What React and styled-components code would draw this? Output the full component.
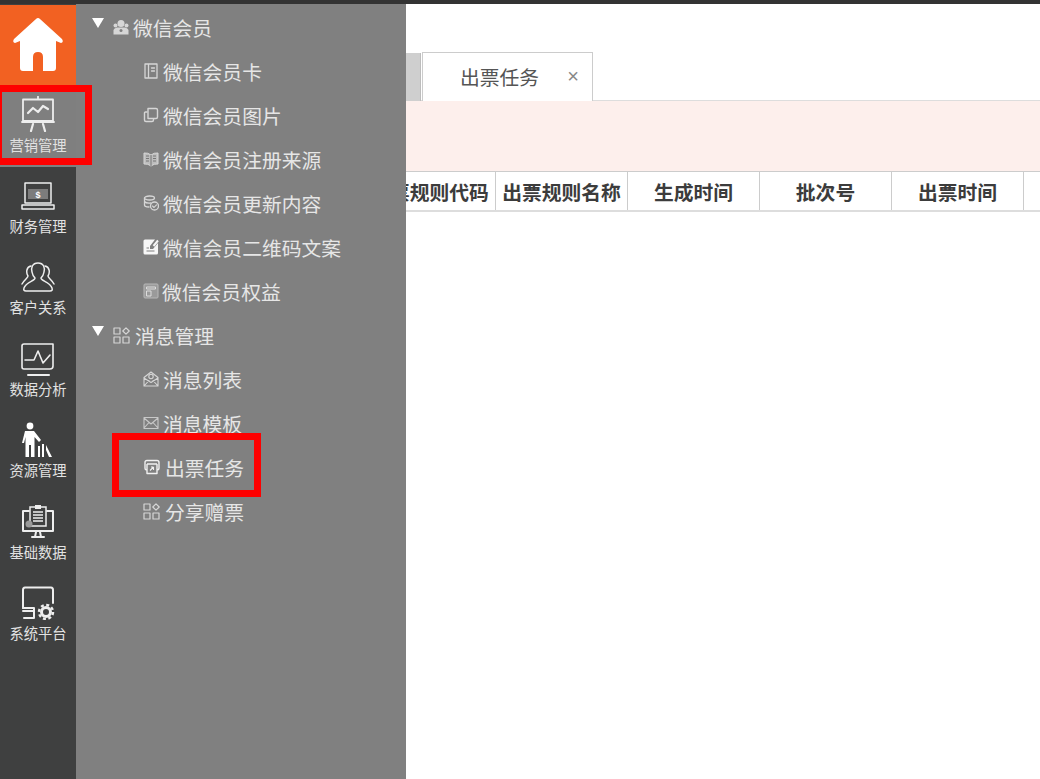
import React from "react";
import styled, { createGlobalStyle } from "styled-components";

const Global = createGlobalStyle`
  html, body { margin: 0; padding: 0; height: 100%; background: #fff; }
  body { font-family: "Noto Sans CJK SC", "Liberation Sans", sans-serif; overflow: hidden; }
  #root { height: 100%; }
`;

const Shell = styled.div`
  position: relative;
  width: 1040px;
  height: 779px;
  overflow: hidden;
  display: flex;
  flex-direction: column;
`;
const TopBar = styled.div`
  height: 4px;
  flex: none;
  background: #333;
`;
const Body = styled.div`
  flex: 1;
  display: flex;
  min-height: 0;
`;

/* left dark nav */
const Sidebar = styled.nav`
  width: 76px;
  flex: none;
  background: #3f4040;
  padding-top: 1px;
`;
const HomeBlock = styled.div`
  height: 80px;
  background: #f26122;
  display: flex;
  align-items: center;
  justify-content: center;
`;
const NavItem = styled.div`
  height: 81.5px;
  box-sizing: border-box;
  padding-top: 10px;
  display: flex;
  flex-direction: column;
  align-items: center;
  background: ${(p) => (p.$active ? "#7f7f7f" : "transparent")};
  svg { display: block; flex: none; }
`;
const NavIcon = styled.div`
  height: 38px;
  display: flex;
  align-items: center;
  justify-content: center;
`;
const NavLabel = styled.span`
  margin-top: ${(p) => (p.$active ? 2 : 1)}px;
  font-size: 14.3px;
  line-height: 20px;
  color: #e2e2e2;
  white-space: nowrap;
`;

/* expanded menu */
const Menu = styled.aside`
  width: 330px;
  flex: none;
  background: #808080;
  padding-top: 1px;
`;
const Row = styled.div`
  height: 44px;
  display: flex;
  align-items: center;
  padding-left: ${(p) => p.$indent}px;
  color: #e6e6e6;
  font-size: 19.8px;
  white-space: nowrap;
  svg { flex: none; display: block; }
`;
const Arrow = styled.span`
  width: 0;
  height: 0;
  margin: -8px 9px 0 0;
  border-left: 6px solid transparent;
  border-right: 6px solid transparent;
  border-top: 10px solid #fff;
`;
const RowText = styled.span`
  margin-left: ${(p) => p.$gap}px;
`;

/* right content */
const Main = styled.main`
  flex: 1;
  min-width: 0;
  overflow: hidden;
  background: #fff;
`;
const Tabs = styled.div`
  height: 49px;
  margin-top: 48px;
  box-sizing: border-box;
  display: flex;
  align-items: flex-end;
  border-bottom: 1px solid #ddd;
`;
const OldTab = styled.div`
  width: 15px;
  height: 48px;
  box-sizing: border-box;
  background: #cfcfcf;
  border-right: 1px solid #bdbdbd;
  margin-bottom: -1px;
`;
const Tab = styled.div`
  width: 171px;
  height: 49px;
  margin-left: 1px;
  margin-bottom: -1px;
  box-sizing: border-box;
  background: #fff;
  border: 1px solid #ccc;
  border-bottom: none;
  display: flex;
  align-items: center;
  padding: 0 13px 2px 37px;
  color: #555;
  font-size: 19.8px;
`;
const TabClose = styled.span`
  margin-left: auto;
  color: #888;
  font-family: "Liberation Sans", sans-serif;
  font-size: 20px;
  line-height: 1;
`;
const Notice = styled.div`
  height: 70px;
  background: #fdefec;
`;
const HeadRow = styled.div`
  display: grid;
  grid-template-columns: repeat(6, 132px);
  margin-left: -42px;
  height: 41px;
  box-sizing: border-box;
  border-top: 1px solid #ccc;
  border-bottom: 2px solid #ddd;
  width: calc(100% + 42px);
`;
const HeadCell = styled.div`
  box-sizing: border-box;
  border-right: 1px solid #ccc;
  display: flex;
  align-items: center;
  justify-content: center;
  font-size: 19.8px;
  font-weight: 700;
  color: #3c3c3c;
  white-space: nowrap;
`;
const Marker = styled.div`
  position: absolute;
  box-sizing: border-box;
  left: ${(p) => p.$x}px;
  top: ${(p) => p.$y}px;
  width: ${(p) => p.$w}px;
  height: ${(p) => p.$h}px;
  border: 7px solid #fe0000;
  pointer-events: none;
`;

const line = { fill: "none", stroke: "currentColor", strokeLinecap: "round", strokeLinejoin: "round" };

const HomeIcon = () => (
  <svg width="52" height="56" viewBox="0 0 52 56">
    <path d="M26 1 Q27 1 28 2 L50 22 Q52 25 49 26 L44 24 V51 Q44 54 41 54 H31 V40 Q31 35 26 35 Q21 35 21 40 V54 H11 Q8 54 8 51 V24 L3 26 Q0 25 2 22 L24 2 Q25 1 26 1 Z" fill="#fff" />
  </svg>
);

const navIcons = {
  board: (
    <svg width="34" height="36" viewBox="0 0 34 36" color="#eee">
      <g {...line} strokeWidth="1.800">
        <path d="M17 0.500 V3 M2 3.500 H32 V25 H2 Z M1 26 H33" />
        <path d="M7 17 L12 12 L17 16 L22 10 L27 13" strokeWidth="2.200" />
        <path d="M12 28 L10 35 M22 28 L24 35" strokeWidth="2.200" />
      </g>
    </svg>
  ),
  laptop: (
    <svg width="34" height="30" viewBox="0 0 34 30" color="#eee">
      <g {...line} strokeWidth="1.500">
        <path d="M4 2 H30 V22 H4 Z" />
        <path d="M1 24 H33 V28 H1 Z" />
      </g>
      <rect x="7" y="8" width="20" height="10" fill="currentColor" opacity=".35" />
      <text x="17" y="17" fontSize="9" fontWeight="700" textAnchor="middle" fill="#fff" fontFamily="Liberation Sans, sans-serif">$</text>
    </svg>
  ),
  people: (
    <svg width="34" height="32" viewBox="0 0 34 32" color="#eee">
      <g {...line} strokeWidth="1.500">
        <path d="M17 2 C11 2 10 7 11 11 C11.500 14 13 16 14 17 C14 20 5 21 3 27 Q2 30 5 30 H29 Q32 30 31 27 C29 21 20 20 20 17 C21 16 22.500 14 23 11 C24 7 23 2 17 2 Z" />
        <path d="M10 5 C5 6 5 12 7 15 C7 17 3 19 1 23 M24 5 C29 6 29 12 27 15 C27 17 31 19 33 23" />
      </g>
    </svg>
  ),
  chart: (
    <svg width="34" height="34" viewBox="0 0 34 34" color="#eee">
      <g {...line} strokeWidth="1.600">
        <path d="M3 2 H32 V24 Q32 27 29 27 H3 Q1 27 1 25 V4 Q1 2 3 2 Z" />
        <path d="M7 33 H28" strokeWidth="2" />
        <path d="M4 18 H13 L17 9 L22 21 L29 13" />
      </g>
    </svg>
  ),
  worker: (
    <svg width="34" height="36" viewBox="0 0 34 36" color="#fff">
      <circle cx="9" cy="4" r="3.400" fill="currentColor" />
      <path d="M4 9 H13 L20 18 L18 20 L13.500 15 V35 H10 V23 H8 V35 H4.500 V15 L3 21 H1 Z" fill="currentColor" />
      <path d="M17 24 H19 V35 H17 Z M21 22 H23 V35 H21 Z M25 23 L31 35 H28 L25 28 Z" fill="currentColor" />
    </svg>
  ),
  clipboard: (
    <svg width="34" height="36" viewBox="0 0 34 36" color="#eee">
      <g {...line} strokeWidth="2">
        <path d="M8 7 H2 V27 H32 V7 H26" />
        <path d="M11 33 H23 M15 28 L14 33 M19 28 L20 33" />
      </g>
      <path d="M9 3 H25 V22 H9 Z" fill="#3f4040" stroke="currentColor" strokeWidth="1.500" />
      <rect x="14" y="1" width="6" height="4" fill="currentColor" />
      <path d="M12 8 H22 M12 11 H22 M12 14 H22 M12 17 H22" stroke="currentColor" strokeWidth="1.300" />
      <circle cx="8" cy="20" r="3.500" fill="#999" />
    </svg>
  ),
  gear: (
    <svg width="34" height="34" viewBox="0 0 34 34" color="#eee">
      <g {...line} strokeWidth="2">
        <path d="M2 22 V4 Q2 1.500 4 1.500 H30 Q32 1.500 32 4 V17" />
        <path d="M2 22 H13 V25 H2 M13 25 V32 H3" />
      </g>
      <circle cx="25" cy="26" r="4.500" fill="none" stroke="currentColor" strokeWidth="3" />
      <circle cx="25" cy="26" r="7" fill="none" stroke="currentColor" strokeWidth="2.500" strokeDasharray="3 2.500" />
    </svg>
  ),
};

const S = ({ children, w = 16, h = 16, vb = "0 0 16 16" }) => (
  <svg width={w} height={h} viewBox={vb} color="#d6d6d6">{children}</svg>
);

const gridIcon = (
  <S w={17} h={17} vb="0 0 17 17">
    <g {...line} strokeWidth="1.200">
      <path d="M1 1 H7 V7 H1 Z M1 10 H7 V16 H1 Z M10 10 H16 V16 H10 Z" />
      <path d="M13 0.800 L16.200 4 L13 7.200 L9.800 4 Z" />
    </g>
  </S>
);

const menuIcons = {
  members: (
    <S>
      <circle cx="8" cy="4.500" r="3.500" fill="currentColor" />
      <circle cx="2.500" cy="6.500" r="2" fill="currentColor" />
      <circle cx="13.500" cy="6.500" r="2" fill="currentColor" />
      <path d="M0.500 15.500 V11 Q1 9 4 8.500 H12 Q15 9 15.500 11 V15.500 Z" fill="currentColor" />
      <circle cx="8" cy="11.500" r="1.500" fill="#808080" />
    </S>
  ),
  card: (
    <S>
      <g {...line} strokeWidth="1.300">
        <path d="M2 1 H14 V15 H2 Z M5.500 1 V15 M8.500 5 H11.500 M8.500 8 H11.500" />
      </g>
    </S>
  ),
  copy: (
    <S>
      <g {...line} strokeWidth="1.400">
        <path d="M5 1.500 H13 Q14.500 1.500 14.500 3 V10 Q14.500 11.500 13 11.500 H5 Z" />
        <path d="M4 5 H2.500 Q1.500 5 1.500 6 V13 Q1.500 14.500 3 14.500 H9 Q10.500 14.500 10.500 13 V12" />
      </g>
    </S>
  ),
  book: (
    <S>
      <path d="M1 2 Q5 1.500 8 4 Q11 1.500 15 2 V13 Q11 12.500 8 15 Q5 12.500 1 13 Z" fill="#bdbdbd" stroke="currentColor" strokeWidth="1" />
      <path d="M8 4 V15 M3 5 H6 M3 7.500 H6 M3 10 H6 M10 5 H13 M10 7.500 H13 M10 10 H13" stroke="#777" strokeWidth="1" />
    </S>
  ),
  stack: (
    <S>
      <g {...line} strokeWidth="1.300">
        <ellipse cx="6.500" cy="3" rx="5" ry="2" />
        <path d="M1.500 3 V10 Q1.500 12 6 12 M1.500 6.500 Q3 8.500 8 8" />
      </g>
      <circle cx="11.500" cy="11" r="4" fill="#808080" stroke="currentColor" strokeWidth="1.300" />
      <path d="M9.500 11 L11 12.500 L13.500 9.800" {...line} strokeWidth="1.100" />
    </S>
  ),
  note: (
    <S>
      <path d="M2 0.500 H12 L7 7 V10 H10 L15 4 V14 Q15 15.500 13.500 15.500 H2 Q0.500 15.500 0.500 14 V2 Q0.500 0.500 2 0.500 Z" fill="#f7f7f7" />
      <path d="M10.500 7 L15 1.500" stroke="#f7f7f7" strokeWidth="2" />
      <path d="M3.500 12 H11.500 M3.500 9 H6" stroke="#808080" strokeWidth="1.200" />
    </S>
  ),
  form: (
    <S>
      <rect x="1" y="1" width="14" height="14" rx="1" fill="#9a9a9a" stroke="#b8b8b8" />
      <path d="M3.500 4 H12.500 V6 H3.500 Z M3.500 8 H8 V13 H3.500 Z" fill="none" stroke="#dcdcdc" />
    </S>
  ),
  openMail: (
    <S>
      <g {...line} strokeWidth="1.100">
        <path d="M1 6.500 L8 1 L15 6.500 V15 H1 Z M1 7 L8 11.500 L15 7 M1 15 L6 9.500 M15 15 L10 9.500" />
        <circle cx="8" cy="5.500" r="2.200" />
      </g>
    </S>
  ),
  mail: (
    <S>
      <g {...line} strokeWidth="1.100" color="#c8c8c8">
        <path d="M1 2.500 H15 V13.500 H1 Z M1 3 L8 9 L15 3 M1 13 L6 7.500 M15 13 L10 7.500" />
      </g>
    </S>
  ),
  ticket: (
    <S>
      <path d="M3 1.500 H13 Q15 1.500 15 3.500 V9 Q15 11 13 11 V14.500 H3 V11 Q1 11 1 9 V3.500 Q1 1.500 3 1.500 Z M3 5 H13 M3 5 V11 M13 5 V11" fill="none" stroke="#f0f0f0" strokeWidth="1.400" strokeLinejoin="round" />
      <path d="M6 11.500 L9.500 8 M9.500 8 V11 M9.500 8 H7" fill="none" stroke="#f0f0f0" strokeWidth="1.100" />
    </S>
  ),
  grid: gridIcon,
};

const navs = [
  { icon: "board", label: "营销管理", active: true },
  { icon: "laptop", label: "财务管理" },
  { icon: "people", label: "客户关系" },
  { icon: "chart", label: "数据分析" },
  { icon: "worker", label: "资源管理" },
  { icon: "clipboard", label: "基础数据" },
  { icon: "gear", label: "系统平台" },
];

const rows = [
  { group: true, icon: "members", text: "微信会员", gap: 4 },
  { icon: "card", text: "微信会员卡", gap: 4 },
  { icon: "copy", text: "微信会员图片", gap: 4 },
  { icon: "book", text: "微信会员注册来源", gap: 4 },
  { icon: "stack", text: "微信会员更新内容", gap: 4 },
  { icon: "note", text: "微信会员二维码文案", gap: 4 },
  { icon: "form", text: "微信会员权益", gap: 3 },
  { group: true, icon: "grid", text: "消息管理", gap: 5 },
  { icon: "openMail", text: "消息列表", gap: 4 },
  { icon: "mail", text: "消息模板", gap: 4 },
  { icon: "ticket", text: "出票任务", gap: 5, indent: 68 },
  { icon: "grid", text: "分享赠票", gap: 5 },
];

const columns = ["出票规则代码", "出票规则名称", "生成时间", "批次号", "出票时间", ""];

export default function App() {
  return (
    <>
      <Global />
      <Shell>
        <TopBar />
        <Body>
          <Sidebar>
            <HomeBlock><HomeIcon /></HomeBlock>
            {navs.map((n) => (
              <NavItem key={n.label} $active={n.active}>
                <NavIcon>{navIcons[n.icon]}</NavIcon>
                <NavLabel $active={n.active}>{n.label}</NavLabel>
              </NavItem>
            ))}
          </Sidebar>
          <Menu>
            {rows.map((r) => (
              <Row key={r.text} $indent={r.group ? 16 : r.indent || 67}>
                {r.group && <Arrow />}
                {menuIcons[r.icon]}
                <RowText $gap={r.gap}>{r.text}</RowText>
              </Row>
            ))}
          </Menu>
          <Main>
            <Tabs>
              <OldTab />
              <Tab>
                出票任务
                <TabClose>×</TabClose>
              </Tab>
            </Tabs>
            <Notice />
            <HeadRow>
              {columns.map((c, i) => (
                <HeadCell key={i}>{c}</HeadCell>
              ))}
            </HeadRow>
          </Main>
        </Body>
        <Marker $x={-5} $y={85} $w={97} $h={80} />
        <Marker $x={112} $y={433} $w={149} $h={64} />
      </Shell>
    </>
  );
}
